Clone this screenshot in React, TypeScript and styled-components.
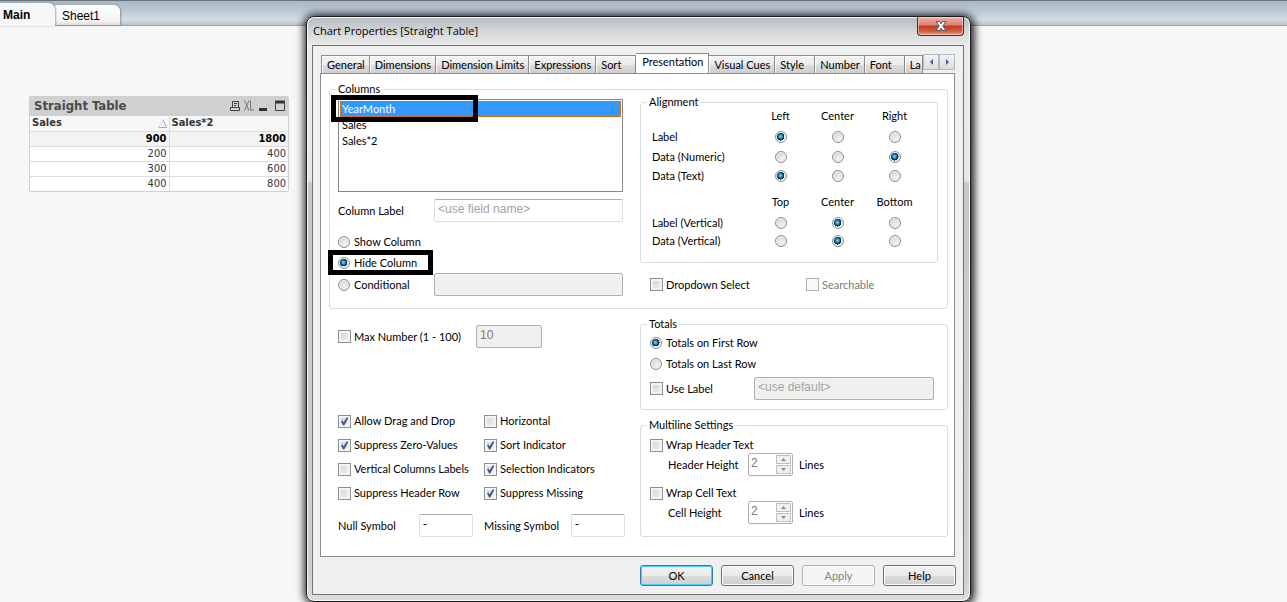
import React, { useState } from "react";
import styled, { createGlobalStyle, css } from "styled-components";

const uiFont = 'Lato, "Liberation Sans", Arial, sans-serif';
const fieldFont = '"Liberation Sans", Arial, sans-serif';
const sheetFont = '"DejaVu Sans Condensed", "DejaVu Sans", sans-serif';

const GlobalStyle = createGlobalStyle`
  * { box-sizing: border-box; }
  body { margin: 0; background: #f7f7f7; font-family: ${uiFont}; font-size: 11px; color: #000; }
  button, input { font: inherit; color: inherit; }
`;

/* Document behind the dialog */

const Page = styled.div`
  position: relative;
  min-height: 100vh;
  overflow: hidden;
`;

const SheetTabs = styled.nav`
  display: flex;
  align-items: flex-end;
  height: 26px;
  border-top: 1px solid #6b7277;
  border-bottom: 1px solid #9aa3aa;
  background: linear-gradient(#a7b7c3, #d3dce4 80%, #b9c2c9);
`;

const SheetTab = styled.button<{ $active?: boolean }>`
  height: 20px;
  width: 65px;
  padding: 2px 0 0 7px;
  border: 0;
  border-radius: 0 6px 0 0;
  text-align: left;
  font-family: ${fieldFont};
  font-size: 12px;
  background: linear-gradient(#fdfdfd, #f4f4f4 80%, #dcdcdc);
  box-shadow: 1px 0 2px rgba(0, 0, 0, 0.3);
  ${(p) =>
    p.$active &&
    css`
      position: relative;
      height: 23px;
      width: 55px;
      margin-bottom: -1px;
      padding: 0 0 0 3px;
      font-weight: bold;
      background: #f7f7f7;
    `}
`;

const SheetBody = styled.main`
  padding: 70px 29px;
`;

const SheetObject = styled.section`
  width: 260px;
  border: 1px solid #cfcfcf;
  border-radius: 2px;
  background: #fff;
  font-family: ${sheetFont};
  font-size: 11px;
  color: #363636;
`;

const Caption = styled.header`
  display: flex;
  align-items: center;
  justify-content: space-between;
  height: 19px;
  padding: 0 3px 2px 4px;
  background: #d0d0d0;
  font-size: 13px;
  font-weight: bold;
  color: #4a4a4a;
`;

const DataTable = styled.table`
  width: 100%;
  border-collapse: collapse;
  table-layout: fixed;
  th, td { height: 15px; padding: 0 2px; line-height: 14px; border-top: 1px solid #dcdcdc; text-align: right; }
  th + th, td + td { border-left: 1px solid #dcdcdc; }
  thead th { text-align: left; background: #f7f7f7; border-top: 0; }
  th:first-child { width: 139px; }
`;

const TotalRow = styled.tr`
  background: #f3f3f3;
  font-weight: bold;
  color: #000;
`;

const HeadCell = styled.span`
  display: flex;
  align-items: center;
  justify-content: space-between;
`;

/* Dialog frame */

const Dialog = styled.div`
  position: absolute;
  left: 306px;
  top: 16px;
  width: 665px;
  padding: 0 6px 6px 5px;
  border: 1px solid #1a1a1a;
  border-radius: 8px;
  background: linear-gradient(#b4bbc0, #d4d6d8 14px, #ececec 29px, #e6e6e6 164px, #c8c8c8 166px, #cfcfcf 560px, #dedede);
  box-shadow: inset 0 0 0 1px #f8f8f8, 0 0 9px 2px rgba(0, 0, 0, 0.75), 3px 3px 8px rgba(0, 0, 0, 0.5);
`;

const TitleBar = styled.header`
  display: flex;
  align-items: flex-start;
  justify-content: space-between;
  height: 28px;
  padding-left: 1px;
`;

const Title = styled.h1`
  margin: 0;
  padding-top: 6px;
  font: normal 11px/16px "Open Sans", "Noto Sans", sans-serif;
`;

const CloseButton = styled.button`
  display: flex;
  align-items: center;
  justify-content: center;
  width: 47px;
  height: 19px;
  padding: 0;
  border: 1px solid #5c2420;
  border-top: 0;
  border-radius: 0 0 4px 4px;
  background: linear-gradient(#eeb0a4, #db8475 8px, #c23a22 9px, #d05a3c 14px, #e8a080);
  box-shadow: inset 0 0 0 1px rgba(255, 255, 255, 0.45);
`;

const Client = styled.div`
  padding: 7px 8px 8px 7px;
  border: 1px solid #707275;
  background: #f0f0f0;
`;

const TabStrip = styled.div`
  display: flex;
  align-items: flex-end;
  height: 20px;
  padding-left: 1px;
`;

const Tab = styled.button<{ $active?: boolean; $partial?: boolean }>`
  flex: ${(p) => (p.$partial ? "1" : "none")};
  min-width: ${(p) => (p.$partial ? "0" : "40px")};
  height: 18px;
  padding: 1px ${(p) => (p.$partial ? "0" : "4px")} 0 5px;
  border: 1px solid #898c95;
  border-left-width: 0;
  border-bottom: 0;
  text-align: left;
  line-height: 16px;
  white-space: nowrap;
  background: linear-gradient(#f3f3f3, #ebebeb 50%, #dddddd 51%, #cfcfcf);
  box-shadow: inset 1px 1px 0 #fcfcfc;
  &:first-child { border-left-width: 1px; }
  ${(p) =>
    p.$active &&
    css`
      height: 20px;
      padding: 0 5px 3px 6px;
      background: #fff;
    `}
`;

const TabScroller = styled.div`
  display: flex;
  flex: none;
  align-self: flex-start;
  padding-top: 1px;
`;

const ScrollButton = styled.button`
  display: flex;
  align-items: center;
  justify-content: center;
  width: 16px;
  height: 16px;
  padding: 0;
  border: 1px solid #b4b8be;
  background: linear-gradient(#f4f4f4, #dcdcdc);
`;

const Panel = styled.div`
  padding: 8px 6px 19px 8px;
  border: 1px solid #898c95;
  background: #fff;
`;

const Group = styled.fieldset`
  min-width: 0;
  margin: 0;
  padding: 0 9px 12px 8px;
  border: 1px solid #d5dfe5;
  border-radius: 3px;
`;

const Legend = styled.legend`
  margin-left: -2px;
  padding: 0 2px;
  line-height: 14px;
`;

const SubLegend = styled(Legend)`
  margin-left: 0;
`;

/* Controls */

const CheckLabel = styled.label<{ $disabled?: boolean; $compact?: boolean }>`
  display: flex;
  align-items: center;
  gap: 3px;
  min-height: ${(p) => (p.$compact ? "16px" : "21px")};
  line-height: 14px;
  white-space: nowrap;
  color: ${(p) => (p.$disabled ? "#7a7a7a" : "#000")};
`;

const BoxWrap = styled.span`
  position: relative;
  display: flex;
  width: 13px;
  height: 13px;
  svg { position: absolute; left: 2px; top: 2px; pointer-events: none; }
`;

const BoxInput = styled.input`
  appearance: none;
  width: 13px;
  height: 13px;
  margin: 0;
  border: 1px solid #8e8f8f;
  background: linear-gradient(135deg, #cbcfd5, #f6f6f6);
  background-clip: padding-box;
  box-shadow: inset 0 0 0 2px #f4f4f4;
  &:disabled { border-color: #b1b1b1; background: #f8f8f8; box-shadow: none; }
`;

const RadioInput = styled.input`
  appearance: none;
  flex: none;
  width: 12px;
  height: 12px;
  margin: 0;
  border: 1px solid #8e8f8f;
  border-radius: 50%;
  background: radial-gradient(circle at 60% 65%, #f4f4f4, #d4d6d8 70%);
  box-shadow: inset 0 0 0 1px #f4f4f4;
  ${CheckLabel} > & { margin-right: 1px; }
  &:checked {
    background: radial-gradient(circle at 45% 45%, #8fd8f4 0, #1d86b8 2px, #0b3556 3px, #0b3556 4px, #e4e7ea 4px);
  }
`;

const TextField = styled.input`
  width: 100%;
  min-width: 0;
  height: 23px;
  padding: 0 3px 4px;
  border: 1px solid #dbdfe6;
  border-top-color: #abadb3;
  border-radius: 2px;
  background: #fff;
  font-family: ${fieldFont};
  font-size: 12px;
  &::placeholder { color: #a3a3a3; opacity: 1; }
  &:disabled { border-color: #afafaf; background: #f0f0f0; color: #7a7a7a; }
`;

const Muted = styled.span<{ $indent?: boolean }>`
  line-height: 14px;
  white-space: nowrap;
  padding-left: ${(p) => (p.$indent ? "18px" : "0")};
`;

const ColumnsGrid = styled.div`
  display: grid;
  grid-template-columns: 285px minmax(0, 1fr);
  column-gap: 17px;
`;

const ColumnsSide = styled.div`
  padding-top: 3px;
`;

const ListBox = styled.ul`
  position: relative;
  height: 93px;
  margin: 0 0 7px;
  padding: 1px;
  border: 1px solid #828790;
  list-style: none;
`;

const ListItem = styled.li<{ $selected?: boolean }>`
  height: 16px;
  padding-left: 2px;
  line-height: 16px;
  ${(p) =>
    p.$selected &&
    css`
      color: #fff;
      background: #3399ff;
      outline: 1px dotted #cc6600;
      outline-offset: -1px;
    `}
`;

const Marker = styled.span<{ $for: "item" | "option" }>`
  position: absolute;
  border: 5px solid #000;
  pointer-events: none;
  ${(p) =>
    p.$for === "item"
      ? css`left: -8px; top: -5px; width: 147px; height: 27px;`
      : css`left: -10px; top: -2px; width: 105px; height: 25px;`}
`;

const FieldRow = styled.div<{ $label: number; $gap?: number }>`
  position: relative;
  display: grid;
  grid-template-columns: ${(p) => p.$label}px minmax(0, 1fr);
  align-items: center;
  margin-bottom: ${(p) => p.$gap ?? 0}px;
`;

const AlignGroup = styled(Group)`
  margin: -1px 0 11px;
  padding: 0 14px 12px 11px;
  legend { margin-left: -5px; }
`;

const AlignRow = styled.div<{ $h: number; $mt?: number }>`
  display: grid;
  grid-template-columns: minmax(0, 1fr) repeat(3, 57px);
  align-items: center;
  height: ${(p) => p.$h}px;
  margin-top: ${(p) => p.$mt ?? 0}px;
  line-height: 14px;
`;

const AlignCell = styled.span`
  display: flex;
  justify-content: center;
`;

const SelectRow = styled.div`
  display: grid;
  grid-template-columns: 156px 1fr;
  padding-left: 10px;
`;

const LowerGrid = styled.div`
  display: grid;
  grid-template-columns: 302px minmax(0, 1fr);
  margin-top: 8px;
  padding-left: 9px;
`;

const Options = styled.div`
  padding-top: 8px;
`;

const MaxRow = styled.div`
  display: grid;
  grid-template-columns: 138px 66px;
  align-items: center;
  margin-bottom: 61px;
`;

const OptionGrid = styled.div`
  display: grid;
  grid-template-columns: 146px 1fr;
  grid-auto-rows: 24px;
  align-items: center;
  margin-bottom: 9px;
`;

const SymbolRow = styled.div`
  display: grid;
  grid-template-columns: 81px 54px 98px 54px;
  align-items: center;
  label:nth-of-type(2) { padding-left: 11px; }
`;

const RightStack = styled.div`
  display: grid;
  gap: 8px;
  align-content: start;
`;

const RightGroup = styled(Group)`
  padding: 1px 13px 9px 9px;
  legend { margin-left: -3px; }
`;

const UseLabelRow = styled(FieldRow)`
  margin-top: 3px;
`;

const MultilineGroup = styled(RightGroup)`
  padding-top: 5px;
  padding-bottom: 12px;
`;

const SpinRow = styled.div`
  display: grid;
  grid-template-columns: 98px 45px auto;
  align-items: center;
  & + label { margin-top: 9px; }
  > :last-child { padding-left: 6px; }
`;

const Spinner = styled.span`
  display: flex;
  width: 45px;
  height: 23px;
  padding: 1px;
  border: 1px solid #afafaf;
  border-radius: 2px;
  background: #fff;
`;

const SpinInput = styled.input`
  flex: 1;
  min-width: 0;
  padding: 0 1px 3px;
  border: 0;
  background: none;
  font-family: ${fieldFont};
  font-size: 12px;
  &:disabled { color: #7a7a7a; }
`;

const SpinButtons = styled.span`
  display: grid;
  grid-template-rows: 9px 9px;
  gap: 1px;
  width: 15px;
`;

const SpinButton = styled.button`
  display: flex;
  align-items: center;
  justify-content: center;
  padding: 0;
  border: 1px solid #bfbfbf;
  background: #f0f0f0;
`;

const Actions = styled.footer`
  display: flex;
  justify-content: flex-end;
  gap: 8px;
  padding-top: 8px;
  margin-right: -1px;
`;

const ActionButton = styled.button<{ $primary?: boolean }>`
  width: 73px;
  height: 21px;
  padding: 0;
  border: 1px solid ${(p) => (p.$primary ? "#2a7fa8" : "#707070")};
  border-radius: 3px;
  line-height: 17px;
  background: linear-gradient(#f2f2f2, #ebebeb 50%, #dddddd 51%, #cfcfcf);
  box-shadow: inset 0 0 0 1px ${(p) => (p.$primary ? "#48d0f8" : "#fcfcfc")};
  &:disabled { border-color: #adb2b5; background: #f4f4f4; color: #838383; }
`;

function Check({ label, on, disabled, compact }: { label: string; on?: boolean; disabled?: boolean; compact?: boolean }) {
  const [checked, setChecked] = useState(!!on);
  return (
    <CheckLabel $disabled={disabled} $compact={compact}>
      <BoxWrap>
        <BoxInput type="checkbox" checked={checked} disabled={disabled} onChange={() => setChecked(!checked)} />
        {checked && (
          <svg width="9" height="9" viewBox="0 0 9 9">
            <path d="M1 4.2 L2.3 3.4 L3.6 5.6 L6.6 0.4 L8.4 0.4 L4.2 8.4 L3.2 8.4 Z" fill="#3b4f96" />
          </svg>
        )}
      </BoxWrap>
      {label}
    </CheckLabel>
  );
}

function Radio({ label, name, on }: { label: string; name: string; on?: boolean }) {
  return (
    <CheckLabel>
      <RadioInput type="radio" name={name} defaultChecked={on} />
      {label}
    </CheckLabel>
  );
}

function AlignOptions({ label, options, value, height, mt }: { label: string; options: string[]; value: string; height: number; mt?: number }) {
  return (
    <AlignRow $h={height} $mt={mt} role="radiogroup" aria-label={label}>
      <span>{label}</span>
      {options.map((o) => (
        <AlignCell key={o}>
          <RadioInput type="radio" name={label} aria-label={o} defaultChecked={o === value} />
        </AlignCell>
      ))}
    </AlignRow>
  );
}

function AlignHead({ options, mt }: { options: string[]; mt?: number }) {
  return (
    <AlignRow $h={14} $mt={mt}>
      <span />
      {options.map((o) => (
        <AlignCell key={o}>{o}</AlignCell>
      ))}
    </AlignRow>
  );
}

function LineSpinner({ id, label }: { id: string; label: string }) {
  return (
    <SpinRow>
      <Muted as="label" htmlFor={id} $indent>{label}</Muted>
      <Spinner>
        <SpinInput id={id} defaultValue="2" disabled />
        <SpinButtons>
          <SpinButton disabled aria-label="Increase">
            <svg width="5" height="3" viewBox="0 0 5 3"><path d="M0 3 L2.5 0 L5 3 Z" fill="#8a8a8a" /></svg>
          </SpinButton>
          <SpinButton disabled aria-label="Decrease">
            <svg width="5" height="3" viewBox="0 0 5 3"><path d="M0 0 L2.5 3 L5 0 Z" fill="#8a8a8a" /></svg>
          </SpinButton>
        </SpinButtons>
      </Spinner>
      <Muted>Lines</Muted>
    </SpinRow>
  );
}

const tabs = ["General", "Dimensions", "Dimension Limits", "Expressions", "Sort", "Presentation", "Visual Cues", "Style", "Number", "Font"];
const horizontal = ["Left", "Center", "Right"];
const vertical = ["Top", "Center", "Bottom"];

export default function App() {
  return (
    <Page>
      <GlobalStyle />
      <SheetTabs>
        <SheetTab $active>Main</SheetTab>
        <SheetTab>Sheet1</SheetTab>
      </SheetTabs>
      <SheetBody>
        <SheetObject>
          <Caption>
            Straight Table
            <svg width="56" height="14" viewBox="0 0 56 14" fill="none" stroke="#444">
              <path d="M3.5 8.5 V2.5 H9.5 V8.5 M1.5 8.5 H10.5 V11.5 H1.5 Z M5 4.5 H8 M5 6.5 H7" />
              <path d="M15.5 1.5 L20 11.5 M20 1.5 L15.5 11.5 M21.5 1.5 V11 H25" stroke="#777" />
              <path d="M30 10.5 H38" stroke="#333" strokeWidth="3" />
              <path d="M46.5 2 V11.5 H55.5 V2" />
              <path d="M46 3 H56" stroke="#333" strokeWidth="3" />
            </svg>
          </Caption>
          <DataTable>
            <thead>
              <tr>
                <th>
                  <HeadCell>
                    Sales
                    <svg width="9" height="9" viewBox="0 0 9 9" fill="none">
                      <path d="M0.5 8 L5 0.5" stroke="#dcdcdc" />
                      <path d="M5 0.5 L8.5 8.5 H0.5" stroke="#a8a8a8" />
                    </svg>
                  </HeadCell>
                </th>
                <th>Sales*2</th>
              </tr>
            </thead>
            <tbody>
              <TotalRow><td>900</td><td>1800</td></TotalRow>
              <tr><td>200</td><td>400</td></tr>
              <tr><td>300</td><td>600</td></tr>
              <tr><td>400</td><td>800</td></tr>
            </tbody>
          </DataTable>
        </SheetObject>
      </SheetBody>

      <Dialog role="dialog" aria-labelledby="dialog-title">
        <TitleBar>
          <Title id="dialog-title">Chart Properties [Straight Table]</Title>
          <CloseButton aria-label="Close">
            <svg width="12" height="10" viewBox="0 0 12 10">
              <path d="M1 0.5 H4.2 L6 2.8 L7.8 0.5 H11 L7.8 5 L11 9.5 H7.8 L6 7.2 L4.2 9.5 H1 L4.2 5 Z" fill="#fff" stroke="#4e5568" />
            </svg>
          </CloseButton>
        </TitleBar>
        <Client>
          <TabStrip role="tablist">
            {tabs.map((t) => (
              <Tab key={t} role="tab" aria-selected={t === "Presentation"} $active={t === "Presentation"}>{t}</Tab>
            ))}
            <Tab role="tab" $partial>La</Tab>
            <TabScroller>
              <ScrollButton aria-label="Previous tabs">
                <svg width="3" height="6" viewBox="0 0 3 6"><path d="M3 0 V6 L0 3 Z" fill="#3a5fa8" /></svg>
              </ScrollButton>
              <ScrollButton aria-label="Next tabs">
                <svg width="3" height="6" viewBox="0 0 3 6"><path d="M0 0 V6 L3 3 Z" fill="#3a5fa8" /></svg>
              </ScrollButton>
            </TabScroller>
          </TabStrip>
          <Panel role="tabpanel" aria-label="Presentation">
            <Group>
              <Legend>Columns</Legend>
              <ColumnsGrid>
                <ColumnsSide>
                  <ListBox role="listbox" aria-label="Columns">
                    <ListItem role="option" aria-selected $selected>YearMonth</ListItem>
                    <ListItem role="option">Sales</ListItem>
                    <ListItem role="option">Sales*2</ListItem>
                    <Marker $for="item" />
                  </ListBox>
                  <FieldRow $label={96} $gap={9}>
                    <Muted as="label" htmlFor="column-label">Column Label</Muted>
                    <TextField id="column-label" placeholder="<use field name>" />
                  </FieldRow>
                  <FieldRow $label={96}><Radio name="visibility" label="Show Column" /></FieldRow>
                  <FieldRow $label={96}>
                    <Radio name="visibility" label="Hide Column" on />
                    <Marker $for="option" />
                  </FieldRow>
                  <FieldRow $label={96}>
                    <Radio name="visibility" label="Conditional" />
                    <TextField aria-label="Condition" disabled />
                  </FieldRow>
                </ColumnsSide>
                <div>
                  <AlignGroup>
                    <SubLegend>Alignment</SubLegend>
                    <AlignHead options={horizontal} />
                    <AlignOptions label="Label" options={horizontal} value="Left" height={20} mt={4} />
                    <AlignOptions label="Data (Numeric)" options={horizontal} value="Right" height={20} />
                    <AlignOptions label="Data (Text)" options={horizontal} value="Left" height={18} />
                    <AlignHead options={vertical} mt={10} />
                    <AlignOptions label="Label (Vertical)" options={vertical} value="Center" height={18} mt={5} />
                    <AlignOptions label="Data (Vertical)" options={vertical} value="Center" height={18} />
                  </AlignGroup>
                  <SelectRow>
                    <Check label="Dropdown Select" />
                    <Check label="Searchable" disabled />
                  </SelectRow>
                </div>
              </ColumnsGrid>
            </Group>

            <LowerGrid>
              <Options>
                <MaxRow>
                  <Check label="Max Number (1 - 100)" />
                  <TextField aria-label="Max number" defaultValue="10" disabled />
                </MaxRow>
                <OptionGrid>
                  <Check label="Allow Drag and Drop" on />
                  <Check label="Horizontal" />
                  <Check label="Suppress Zero-Values" on />
                  <Check label="Sort Indicator" on />
                  <Check label="Vertical Columns Labels" />
                  <Check label="Selection Indicators" on />
                  <Check label="Suppress Header Row" />
                  <Check label="Suppress Missing" on />
                </OptionGrid>
                <SymbolRow>
                  <Muted as="label" htmlFor="null-symbol">Null Symbol</Muted>
                  <TextField id="null-symbol" defaultValue="-" />
                  <Muted as="label" htmlFor="missing-symbol">Missing Symbol</Muted>
                  <TextField id="missing-symbol" defaultValue="-" />
                </SymbolRow>
              </Options>
              <RightStack>
                <RightGroup>
                  <SubLegend>Totals</SubLegend>
                  <Radio name="totals" label="Totals on First Row" on />
                  <Radio name="totals" label="Totals on Last Row" />
                  <UseLabelRow $label={104}>
                    <Check label="Use Label" />
                    <TextField aria-label="Totals label" placeholder="<use default>" disabled />
                  </UseLabelRow>
                </RightGroup>
                <MultilineGroup>
                  <SubLegend>Multiline Settings</SubLegend>
                  <Check label="Wrap Header Text" compact />
                  <LineSpinner id="header-height" label="Header Height" />
                  <Check label="Wrap Cell Text" compact />
                  <LineSpinner id="cell-height" label="Cell Height" />
                </MultilineGroup>
              </RightStack>
            </LowerGrid>
          </Panel>
          <Actions>
            <ActionButton $primary>OK</ActionButton>
            <ActionButton>Cancel</ActionButton>
            <ActionButton disabled>Apply</ActionButton>
            <ActionButton>Help</ActionButton>
          </Actions>
        </Client>
      </Dialog>
    </Page>
  );
}
